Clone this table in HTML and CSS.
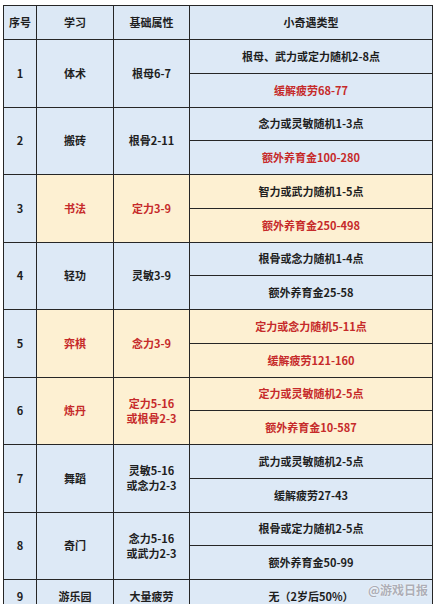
FILE: index.html
```html
<!DOCTYPE html>
<html lang="zh">
<head>
<meta charset="utf-8">
<title>小奇遇类型</title>
<link rel="stylesheet" href="styles.css">
</head>
<body>
<div class="sheet">
  <div class="table">
    <div class="c hd">序号</div>
    <div class="c hd">学习</div>
    <div class="c hd">基础属性</div>
    <div class="c hd">小奇遇类型</div>

    <div class="c sp b">1</div>
    <div class="c sp b">体术</div>
    <div class="c sp b">根母6-7</div>
    <div class="c b">根母、武力或定力随机2-8点</div>
    <div class="c b red">缓解疲劳68-77</div>

    <div class="c sp b">2</div>
    <div class="c sp b">搬砖</div>
    <div class="c sp b">根骨2-11</div>
    <div class="c b">念力或灵敏随机1-3点</div>
    <div class="c b red">额外养育金100-280</div>

    <div class="c sp b">3</div>
    <div class="c sp o red">书法</div>
    <div class="c sp o red">定力3-9</div>
    <div class="c o">智力或武力随机1-5点</div>
    <div class="c o red">额外养育金250-498</div>

    <div class="c sp b">4</div>
    <div class="c sp b">轻功</div>
    <div class="c sp b">灵敏3-9</div>
    <div class="c b">根骨或念力随机1-4点</div>
    <div class="c b">额外养育金25-58</div>

    <div class="c sp b">5</div>
    <div class="c sp o red">弈棋</div>
    <div class="c sp o red">念力3-9</div>
    <div class="c o red">定力或念力随机5-11点</div>
    <div class="c o red">缓解疲劳121-160</div>

    <div class="c sp b">6</div>
    <div class="c sp o red">炼丹</div>
    <div class="c sp o red">定力5-16<br>或根骨2-3</div>
    <div class="c o red">定力或灵敏随机2-5点</div>
    <div class="c o red">额外养育金10-587</div>

    <div class="c sp b">7</div>
    <div class="c sp b">舞蹈</div>
    <div class="c sp b">灵敏5-16<br>或念力2-3</div>
    <div class="c b">武力或灵敏随机2-5点</div>
    <div class="c b">缓解疲劳27-43</div>

    <div class="c sp b">8</div>
    <div class="c sp b">奇门</div>
    <div class="c sp b">念力5-16<br>或武力2-3</div>
    <div class="c b">根骨或定力随机2-5点</div>
    <div class="c b">额外养育金50-99</div>

    <div class="c b">9</div>
    <div class="c b">游乐园</div>
    <div class="c b">大量疲劳</div>
    <div class="c b">无（2岁后50%）</div>
  </div>
  <div class="mark">@游戏日报</div>
</div>
</body>
</html>
```

FILE: styles.css
```css
html, body {
  margin: 0;
  padding: 0;
  background: #ffffff;
  overflow: hidden;
}
body {
  width: 436px;
  height: 604px;
}
.sheet {
  position: relative;
  width: 436px;
  height: 604px;
  padding: 5px 0 0 3px;
  box-sizing: border-box;
}
.table {
  display: grid;
  width: 429px;
  grid-template-columns: 32px 76px 75px 242px;
  grid-template-rows: 33px;
  grid-auto-rows: 32.75px;
  gap: 1px;
  padding: 1px 0 0 1px;
  background: #262626;
  font-family: "Noto Sans CJK SC", "Noto Sans", sans-serif;
  font-weight: 700;
  font-size: 11px;
  color: #1e1e1e;
}
.c {
  display: flex;
  align-items: center;
  justify-content: center;
  text-align: center;
  line-height: 15px;
  background: #dde9f6;
}
.hd { background: #dce8f5; }
.b { background: #dde9f6; }
.o { background: #fdf0d2; }
.sp { grid-row: span 2; }
.red { color: #c62a2a; }
.mark {
  position: absolute;
  right: 8px;
  bottom: 6px;
  font-family: "Noto Sans CJK SC", sans-serif;
  font-size: 12px;
  font-weight: 700;
  color: rgba(150, 150, 160, 0.75);
  text-shadow: 0 0 2px rgba(255, 255, 255, 0.9);
}
```
